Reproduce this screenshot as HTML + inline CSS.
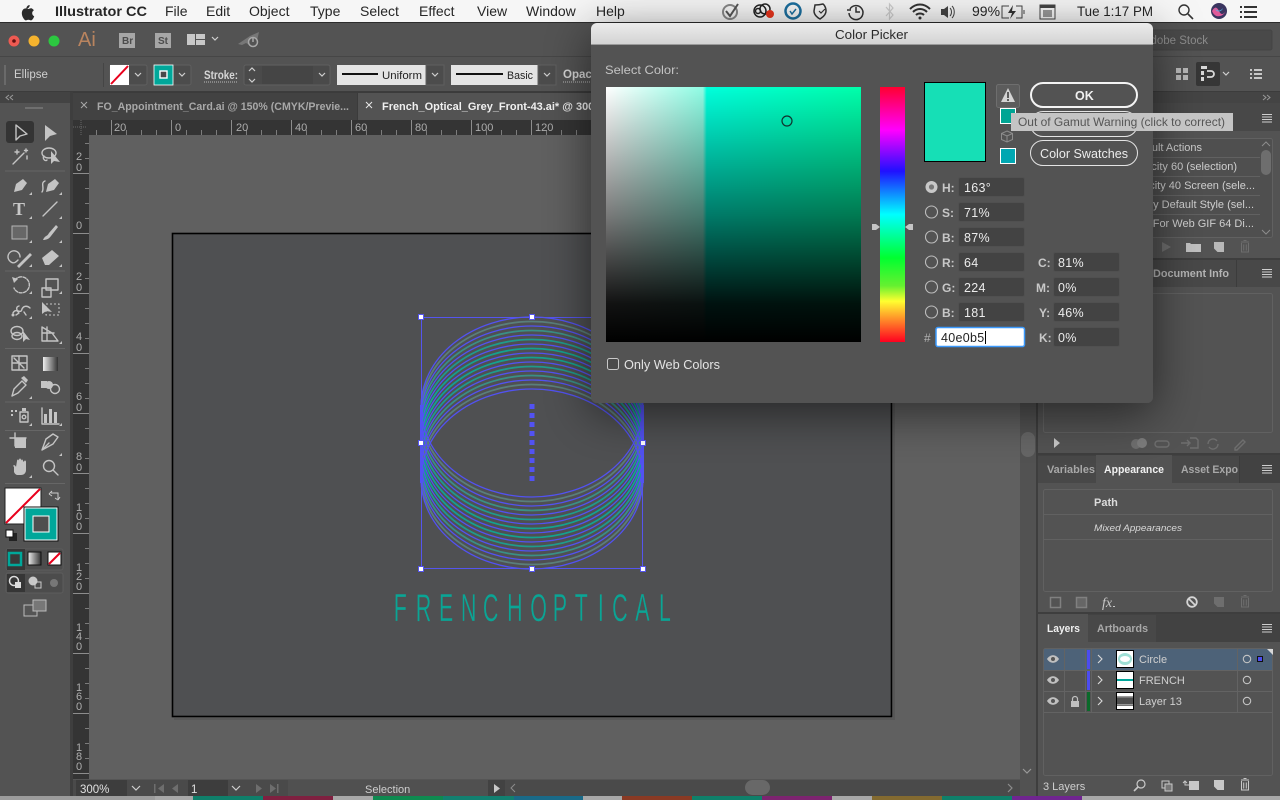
<!DOCTYPE html>
<html><head><meta charset="utf-8"><title>Illustrator CC</title>
<style>
html,body{margin:0;padding:0;background:#535353;width:1280px;height:800px;overflow:hidden}
svg{display:block;position:absolute;left:0;top:0}
text{font-family:"Liberation Sans",sans-serif;font-size:12px;fill:#d4d4d4;white-space:pre}
.m{font-size:14px;fill:#262626}
.b{font-weight:bold}
.f{font-size:12.5px;fill:#ececec;letter-spacing:.3px}
.l{font-size:12px;fill:#c8c8c8;font-weight:bold}
.r{font-size:11px;fill:#adadad}
.p{font-size:11px;fill:#cfcfcf}
.tb{font-size:11px;font-weight:bold;fill:#a8a8a8}
.tw{font-size:11px;font-weight:bold;fill:#f0f0f0}
.ic{fill:none;stroke:#c4c4c4;stroke-width:1.4;stroke-linejoin:round;stroke-linecap:round}
.if{fill:#c4c4c4;stroke:none}
.dim{fill:none;stroke:#6e6e6e;stroke-width:1.4}
.dimf{fill:#6e6e6e}
.tri{fill:#c4c4c4}
.chev{fill:none;stroke:#cfcfcf;stroke-width:1.2}
</style></head><body>
<svg width="1280" height="800" viewBox="0 0 1280 800" xmlns="http://www.w3.org/2000/svg">
<defs>
<linearGradient id="ptop" x1="0" x2="1" y1="0" y2="0">
<stop offset="0" stop-color="#fff"/><stop offset=".38" stop-color="#8ffce4"/><stop offset=".395" stop-color="#00ffdc"/><stop offset="1" stop-color="#00ffaa"/></linearGradient>
<linearGradient id="pdark" x1="0" x2="0" y1="0" y2="1">
<stop offset="0" stop-color="#000" stop-opacity="0"/><stop offset=".5" stop-color="#000" stop-opacity=".52"/><stop offset=".85" stop-color="#000" stop-opacity=".93"/><stop offset="1" stop-color="#000"/></linearGradient>
<linearGradient id="hue" x1="0" x2="0" y1="0" y2="1">
<stop offset="0" stop-color="#ff0030"/><stop offset=".17" stop-color="#ff00ff"/><stop offset=".33" stop-color="#2010ff"/><stop offset=".5" stop-color="#00ffff"/><stop offset=".67" stop-color="#00ff30"/><stop offset=".78" stop-color="#66f030"/><stop offset=".84" stop-color="#ffff30"/><stop offset="1" stop-color="#ff0020"/></linearGradient>
<linearGradient id="ttl" x1="0" x2="0" y1="0" y2="1"><stop offset="0" stop-color="#ececec"/><stop offset="1" stop-color="#d2d2d2"/></linearGradient>
<linearGradient id="gtool" x1="0" x2="1" y1="0" y2="0"><stop offset="0" stop-color="#eee"/><stop offset="1" stop-color="#333"/></linearGradient>
<pattern id="hr" width="60" height="15" patternUnits="userSpaceOnUse" patternTransform="translate(111 120)">
<rect x="0" y="0" width="1" height="15" fill="#8c8c8c"/><rect x="15" y="10" width="1" height="5" fill="#7c7c7c"/><rect x="30" y="10" width="1" height="5" fill="#7c7c7c"/><rect x="45" y="10" width="1" height="5" fill="#7c7c7c"/></pattern>
<pattern id="vr" width="16" height="60" patternUnits="userSpaceOnUse" patternTransform="translate(73 173)">
<rect x="0" y="0" width="16" height="1" fill="#8c8c8c"/><rect x="12" y="15" width="4" height="1" fill="#7c7c7c"/><rect x="12" y="30" width="4" height="1" fill="#7c7c7c"/><rect x="12" y="45" width="4" height="1" fill="#7c7c7c"/></pattern>
<filter id="sh" x="-20%" y="-20%" width="140%" height="150%"><feDropShadow dx="0" dy="10" stdDeviation="24" flood-color="#000" flood-opacity=".55"/></filter>
<g id="menu"><rect x="0" y="0" width="10" height="1" fill="#cfcfcf"/><rect x="0" y="2.5" width="10" height="1" fill="#cfcfcf"/><rect x="0" y="5" width="10" height="1" fill="#cfcfcf"/><rect x="0" y="7.5" width="10" height="1" fill="#cfcfcf"/></g>
<g id="trash"><path d="M-4-5H4M-1.5-6.5H1.5M-3.500-4V5H3.500V-4M-1.300-2.500V3.500M1.300-2.500V3.500" fill="none" stroke="currentColor" stroke-width="1"/></g>
<g id="new"><path d="M-5-5H5V5H-1.500L-5 1.500Z" fill="currentColor"/></g>
</defs>

<!-- app background -->
<rect width="1280" height="800" fill="#535353"/>
<!-- menu bar -->
<rect width="1280" height="22" fill="#f6f6f6"/><rect y="22" width="1280" height="1" fill="#2c2c2c"/>
<path d="M31.300 8.300c-1.200-.1-2.200.7-2.900.7-.7 0-1.500-.7-2.600-.6-1.400 0-2.600.8-3.300 2-1.400 2.400-.4 6 1 8 .7 1 1.400 2 2.400 2 1 0 1.300-.6 2.500-.6s1.500.6 2.500.6 1.700-1 2.300-1.900c.7-1.100 1-2.200 1-2.200s-2-.8-2-3c0-2 1.600-2.900 1.700-3-1-1.400-2.400-1.900-2.600-2zM28.800 7.500c.6-.7 1-1.600.8-2.500-.8 0-1.800.5-2.400 1.200-.5.600-1 1.600-.8 2.500.9 0 1.800-.5 2.400-1.200z" fill="#2b2b2b"/>
<text x="55" y="16" class="m b" textLength="92" lengthAdjust="spacingAndGlyphs">Illustrator CC</text>
<text x="165" y="16" class="m">File</text><text x="206" y="16" class="m">Edit</text><text x="249" y="16" class="m">Object</text><text x="310" y="16" class="m">Type</text><text x="360" y="16" class="m">Select</text><text x="419" y="16" class="m">Effect</text><text x="477" y="16" class="m">View</text><text x="526" y="16" class="m">Window</text><text x="596" y="16" class="m">Help</text>
<!-- status icons -->
<g fill="none" stroke="#333" stroke-width="1.500">
<circle cx="730" cy="12" r="7" stroke="#888" stroke-width="2"/><path d="M726 11l4 5 8-12" stroke="#555" stroke-width="2"/>
<circle cx="760" cy="11" r="6" stroke="#222"/><circle cx="765" cy="9" r="5" stroke="#222"/><circle cx="758" cy="11" r="2.500" stroke="#222"/>
<circle cx="793" cy="11" r="7.500" stroke="#1b6e9e" stroke-width="2.500"/><path d="M790 11l2 3 4-5" stroke="#1b6e9e"/>
<path d="M816 6c4 0 8-1 8-1s3 2 3 7-5 7-6 8c-2-1-6-4-6-8z" transform="translate(-1 -1)"/><path d="M819 11l2 2 4-4" stroke-width="1.200"/>
<path d="M850 9a7 7 0 1 1-1 4M847 10h4M856 7v5h4"/>
<path d="M886 7l7 8-3.500 4v-15l3.500 4-7 8" stroke="#ccc" stroke-width="1.200"/>
<path d="M910 9c6-6 14-6 20 0M913 12c4-4 10-4 14 0M916 15c2-2 6-2 8 0" stroke-width="2"/>
</g>
<circle cx="920" cy="18" r="1.500" fill="#333"/>
<path d="M941 9h3l4-3v12l-4-3h-3z" fill="#444"/><path d="M950 8c2 2 2 6 0 8M952 6c3 3 3 9 0 12" fill="none" stroke="#444" stroke-width="1"/>
<rect x="769" y="10" width="8" height="8" rx="4" fill="#e8341c" transform="translate(-3 0)"/>
<text x="972" y="16" class="m">99%</text>
<path d="M1009 6h-7v12h7M1016 6h6v12h-6M1024 10v4" fill="none" stroke="#444" stroke-width="1"/><path d="M1013 5l-5 8h4l-2 6 6-8h-4z" fill="#333"/>
<rect x="1040" y="5" width="15" height="14" fill="none" stroke="#444"/><rect x="1040" y="5" width="15" height="3" fill="#444"/><rect x="1043" y="10" width="9" height="7" fill="#999"/>
<text x="1077" y="16" class="m" textLength="76" lengthAdjust="spacingAndGlyphs">Tue 1:17 PM</text>
<circle cx="1184" cy="10" r="5" fill="none" stroke="#333" stroke-width="1.400"/><path d="M1188 14l5 5" stroke="#333" stroke-width="1.600"/>
<circle cx="1219" cy="11" r="8" fill="#3a3560"/><path d="M1212 11c3-5 5-4 7 0s4 4 7 0c-3 6-11 8-14 0z" fill="#e05a9a"/><path d="M1215 8c2 4 6 3 8 0-1 4-7 5-8 0z" fill="#53b8e8"/>
<g fill="#333"><rect x="1240" y="6" width="2" height="2"/><rect x="1244" y="6" width="13" height="2"/><rect x="1240" y="11" width="2" height="2"/><rect x="1244" y="11" width="13" height="2"/><rect x="1240" y="16" width="2" height="2"/><rect x="1244" y="16" width="13" height="2"/></g>

<!-- title strip -->
<rect y="23" width="1280" height="34" fill="#535353"/>
<rect y="56" width="1280" height="1" fill="#464646"/>
<circle cx="14" cy="41" r="5.500" fill="#ee5a52"/><circle cx="14" cy="41" r="1.800" fill="#5f1010"/>
<circle cx="34" cy="41" r="5.500" fill="#f5b32e"/><circle cx="54" cy="41" r="5.500" fill="#2cc840"/>
<text x="78" y="46" style="font-size:20px;fill:#b9845f">Ai</text>
<rect x="119" y="33" width="16" height="15" fill="#a6a6a6"/><text x="122" y="44" style="font-size:10px;font-weight:bold;fill:#4c4c4c">Br</text>
<rect x="155" y="33" width="16" height="15" fill="#a6a6a6"/><text x="158" y="44" style="font-size:10px;font-weight:bold;fill:#4c4c4c">St</text>
<g fill="#c8c8c8"><rect x="187" y="34" width="8" height="11"/><rect x="196" y="34" width="9" height="5"/><rect x="196" y="40" width="9" height="5"/></g>
<path d="M212 37l3 3 3-3" class="chev"/>
<path d="M238 44l12-8 9-4-2 9-6 5-5-3-4 2z" fill="#777"/><circle cx="253" cy="42" r="4.500" fill="#535353" stroke="#a8a8a8" stroke-width="1.500"/><path d="M253 37v5" stroke="#a8a8a8" stroke-width="1.500"/>
<rect x="1130" y="30" width="142" height="20" rx="2" fill="#494949" stroke="#444"/>
<text x="1208" y="44" text-anchor="end" style="font-size:11.500px;fill:#8c8c8c">Adobe Stock</text>

<!-- control bar -->
<rect y="57" width="1280" height="35" fill="#535353"/><rect y="91" width="1280" height="1" fill="#3c3c3c"/>
<rect x="4" y="65" width="2" height="20" fill="#6a6a6a"/>
<text x="14" y="78" style="font-size:11.500px;fill:#d0d0d0">Ellipse</text>
<rect x="103" y="63" width="1" height="24" fill="#454545"/>
<rect x="110" y="65" width="37" height="20" rx="2" fill="#4c4c4c" stroke="#5f5f5f"/>
<rect x="110" y="65" width="19" height="20" fill="#fff"/><path d="M111 84l17-18" stroke="#e8001c" stroke-width="2"/>
<path d="M135 73l3 3 3-3" class="chev"/>
<rect x="154" y="65" width="37" height="20" rx="2" fill="#4c4c4c" stroke="#5f5f5f"/>
<rect x="154" y="65" width="19" height="20" fill="#00a79a" stroke="#fff" stroke-width=".8"/><rect x="160" y="71" width="7" height="7" fill="#4a4a4a" stroke="#fff" stroke-width="1.400"/>
<path d="M179 73l3 3 3-3" class="chev"/>
<text x="204" y="79" class="b" style="font-size:11.500px;fill:#d6d6d6" textLength="34" lengthAdjust="spacingAndGlyphs">Stroke:</text>
<path d="M204 82h34" stroke="#bbb" stroke-dasharray="1 1"/>
<rect x="244" y="65" width="86" height="20" rx="2" fill="#4a4a4a" stroke="#5f5f5f"/><rect x="262" y="66" width="51" height="18" fill="#454545"/>
<path d="M249 71l3-3 3 3M249 79l3 3 3-3" class="chev"/><path d="M319 73l3 3 3-3" class="chev"/>
<rect x="337" y="65" width="89" height="20" fill="#e4e4e4"/><rect x="342" y="73" width="36" height="2" fill="#111"/>
<text x="382" y="79" style="font-size:11px;fill:#222" textLength="40" lengthAdjust="spacingAndGlyphs">Uniform</text>
<rect x="426" y="65" width="18" height="20" fill="#4c4c4c" stroke="#5f5f5f"/><path d="M432 73l3 3 3-3" class="chev"/>
<rect x="451" y="65" width="87" height="20" fill="#e4e4e4"/><rect x="456" y="73" width="47" height="2" fill="#111"/>
<text x="507" y="79" style="font-size:11px;fill:#222" textLength="26" lengthAdjust="spacingAndGlyphs">Basic</text>
<rect x="538" y="65" width="18" height="20" fill="#4c4c4c" stroke="#5f5f5f"/><path d="M544 73l3 3 3-3" class="chev"/>
<text x="563" y="78" class="b" style="font-size:11.500px;fill:#d6d6d6">Opacity</text>
<path d="M563 82h30" stroke="#bbb" stroke-dasharray="1 1"/>
<!-- right control -->
<g fill="#b8b8b8"><rect x="1176" y="68" width="5" height="5"/><rect x="1183" y="68" width="5" height="5"/><rect x="1176" y="75" width="5" height="5"/><rect x="1183" y="75" width="5" height="5"/></g>
<rect x="1196" y="62" width="24" height="24" rx="2" fill="#363636"/>
<g fill="#d8d8d8"><rect x="1201" y="66" width="6" height="3"/><rect x="1201" y="71" width="3" height="4"/><rect x="1201" y="77" width="3" height="4"/></g><path d="M1207 71h4a3 3 0 0 1 0 6h-4" fill="none" stroke="#d8d8d8" stroke-width="1.800"/>
<path d="M1223 72l3 3 3-3" class="chev"/>
<g fill="#c8c8c8"><rect x="1250" y="69" width="2" height="2"/><rect x="1254" y="69" width="8" height="2"/><rect x="1250" y="73" width="2" height="2"/><rect x="1254" y="73" width="8" height="2"/><rect x="1250" y="77" width="2" height="2"/><rect x="1254" y="77" width="8" height="2"/></g>

<!-- toolbar -->
<rect y="92" width="70" height="708" fill="#535353"/><rect y="92" width="70" height="11" fill="#434343"/>
<rect x="70" y="92" width="3" height="708" fill="#3e3e3e"/>
<path d="M9 95l-3 2.500 3 2.500M13 95l-3 2.500 3 2.500" fill="none" stroke="#9a9a9a"/>
<rect x="25" y="107" width="18" height="2" fill="#777" opacity=".8"/>
<rect x="6" y="121" width="28" height="22" rx="3" fill="#343434"/>
<g fill="#666"><rect x="5" y="170.500" width="60" height="1"/><rect x="5" y="270.500" width="60" height="1"/><rect x="5" y="348" width="60" height="1"/><rect x="5" y="401.500" width="60" height="1"/><rect x="5" y="430" width="60" height="1"/><rect x="5" y="483" width="60" height="1"/></g>
<!-- tools -->
<path class="ic" d="M16 125v15l4-4 7-2z"/><path class="if" d="M45 125v16l5-5 7-2z"/>
<path class="ic" d="M13 164l11-11" stroke-width="2.500"/><path class="ic" d="M17 150v4M15 152h4M26 149v3M24.500 150.500h3M27 156v3" stroke-width="1"/>
<ellipse class="ic" cx="49" cy="153" rx="7" ry="5"/><path class="if" d="M51 151v13l3-3 6 1z"/><path class="ic" d="M44 156c-2 2 1 6 3 4"/>
<path class="if" d="M14 192l2-8 7-5 4 4-5 7z"/>
<path class="if" d="M46 192l2-8 7-5 4 4-5 7z"/><path class="ic" d="M45 181c-5 2 0 7-3 11"/>
<text x="13" y="215" style="font-family:'Liberation Serif',serif;font-size:18px;font-weight:bold;fill:#c8c8c8">T</text>
<path class="ic" d="M43 216l14-14"/>
<rect x="12" y="226" width="15" height="13" fill="#676767" stroke="#b4b4b4"/>
<path class="if" d="M43 240c2-5 4-3 6-7l7-8 2 2-7 9c-2 3-5 4-8 4z"/>
<path class="ic" d="M20 257a6 6 0 1 0-9 5c3 2 5 0 7-2" /><path class="if" d="M17 266l13-13 2 2-13 13z"/>
<path class="if" d="M42 258l10-8 7 6-10 9h-4z"/>
<path class="ic" d="M15 280a8 8 0 1 1-1 8" stroke-dasharray="3 1.500"/><path class="if" d="M12 277l6 2-4 4z"/>
<rect x="42" y="288" width="9" height="9" class="ic"/><rect x="46" y="279" width="12" height="11" class="ic"/>
<path class="ic" d="M13 313c3-6 8 2 9-4 2-4 6-3 8-1M16 315l3-2M19 306c-4 1-2 5 0 7M24 312l2 3"/><circle cx="13" cy="315" r="1.500" class="if"/>
<path class="if" d="M42 302v12l4-3 6 1z"/><rect x="46" y="304" width="13" height="11" fill="none" stroke="#c4c4c4" stroke-dasharray="2 2"/>
<ellipse class="ic" cx="17" cy="331" rx="6" ry="4.500"/><ellipse class="ic" cx="17" cy="336" rx="5" ry="3.500"/><path class="if" d="M23 331v11l3-3 4 1z"/>
<path class="ic" d="M42 327v14h16l-6-8zM42 333h12M47 327v14"/>
<g><rect x="12" y="356" width="15" height="14" class="ic" stroke-width="1.100"/><path class="ic" d="M13 363h13M19 356v14M14 358l10 10" stroke-width=".8"/></g>
<rect x="43" y="357" width="15" height="14" fill="url(#gtool)"/>
<path class="ic" d="M12 396l2-7 8-8 4 4-8 8z"/><path class="if" d="M21 378l3-2 4 4-2 3z"/>
<rect x="41" y="381" width="6" height="7" class="if"/><circle cx="49" cy="385" r="4" class="if"/><circle cx="55" cy="389" r="4.500" class="ic"/>
<g class="if"><rect x="11" y="410" width="2" height="2"/><rect x="15" y="410" width="2" height="2"/><rect x="11" y="414" width="2" height="2"/></g><rect x="20" y="412" width="8" height="10" class="ic"/><rect x="22" y="408" width="4" height="3" class="if"/><circle cx="24" cy="417" r="1.800" class="ic"/>
<g class="if"><rect x="44" y="414" width="3" height="9"/><rect x="49" y="409" width="3" height="14"/><rect x="54" y="412" width="3" height="11"/></g><path class="ic" d="M42 408v16h17" stroke-width="1"/>
<path class="ic" d="M10 438h16M15 433v13"/><rect x="15" y="438" width="11" height="10" class="if"/>
<path class="ic" d="M42 450l4-11 7-5 5 3-5 7z"/><path class="ic" d="M43 449l6-6"/>
<path class="if" transform="translate(0 5)" d="M14 462c-2-2 1-3 2 0l1-6c0-2 2-2 2 0v-1c0-2 2-2 2 0v1c0-2 2-2 2 0l1 1c0-2 2-2 2 0v8c0 3-2 5-5 5h-3c-2 0-3-1-4-3z"/>
<circle cx="49" cy="466" r="5.500" class="ic"/><path class="ic" d="M53 470l5 5" stroke-width="2"/>
<!-- tool corner tris -->
<g class="tri"><path d="M32 195v-3l-3 3zM62 195v-3l-3 3zM32 219v-3l-3 3zM62 219v-3l-3 3zM32 243v-3l-3 3zM62 243v-3l-3 3zM32 267v-3l-3 3zM62 267v-3l-3 3zM32 294v-3l-3 3zM62 294v-3l-3 3zM32 319v-3l-3 3zM62 344v-3l-3 3zM32 399v-3l-3 3zM32 426v-3l-3 3zM62 426v-3l-3 3zM62 456v-3l-3 3zM32 478v-3l-3 3z"/></g>
<!-- fill stroke -->
<rect x="5" y="488" width="36" height="36" fill="#fff" stroke="#222"/><path d="M6 523l34-34" stroke="#e8001c" stroke-width="2"/>
<rect x="24" y="507" width="34" height="34" fill="#00a79a" stroke="#111" stroke-width="1"/><rect x="25" y="508" width="32" height="32" fill="none" stroke="#fff" stroke-width="1"/>
<rect x="33" y="516" width="16" height="16" fill="#4f4f4f" stroke="#fff" stroke-width="1"/>
<path d="M51 493h7v6M49 494l3-3M49 494l3 2M58 500l-3-2M58 500l2-3" fill="none" stroke="#ccc"/>
<rect x="9" y="533" width="8" height="8" fill="#222"/><rect x="6" y="530" width="7" height="7" fill="#fff" stroke="#111"/>
<rect x="6" y="549" width="57" height="21" rx="2" fill="#4c4c4c" stroke="#5c5c5c"/><rect x="7" y="549" width="18" height="21" fill="#363636"/>
<rect x="9" y="553" width="12" height="12" fill="#393939" stroke="#00a79a" stroke-width="2.500"/>
<rect x="28" y="552" width="13" height="13" fill="url(#gtool)" stroke="#111"/>
<rect x="48" y="552" width="13" height="13" fill="#fff" stroke="#111"/><path d="M49 564l11-11" stroke="#e8001c" stroke-width="2"/>
<rect x="6" y="573" width="57" height="20" rx="2" fill="#4c4c4c" stroke="#5c5c5c"/><rect x="7" y="574" width="18" height="18" fill="#363636"/>
<circle cx="14" cy="581" r="4.500" fill="none" stroke="#ddd" stroke-width="1.500"/><rect x="15" y="582" width="6" height="6" fill="#ddd"/>
<circle cx="33" cy="581" r="4.500" fill="#c8c8c8"/><rect x="35" y="582" width="6" height="6" fill="none" stroke="#ccc"/>
<circle cx="54" cy="583" r="4" fill="#777"/>
<rect x="24" y="605" width="13" height="11" fill="#555" stroke="#bbb"/><rect x="33" y="600" width="13" height="11" fill="#777" stroke="#bbb"/>

<!-- tabs -->
<rect x="73" y="92" width="965" height="28" fill="#3b3b3b"/>
<rect x="73" y="93" width="284" height="27" fill="#424242"/>
<rect x="358" y="93" width="233" height="27" fill="#535353"/>
<path d="M81 102l6 6M87 102l-6 6" stroke="#a8a8a8"/><path d="M366 102l6 6M372 102l-6 6" stroke="#e8e8e8"/>
<text x="97" y="110" class="tb" textLength="252" lengthAdjust="spacingAndGlyphs">FO_Appointment_Card.ai @ 150% (CMYK/Previe...</text>
<text x="382" y="110" class="tw" textLength="222" lengthAdjust="spacingAndGlyphs">French_Optical_Grey_Front-43.ai* @ 300%</text>

<!-- canvas -->
<rect x="89" y="135" width="931" height="645" fill="#606060"/>
<rect x="172.500" y="233.500" width="719" height="483" fill="#4f5052" stroke="#000" stroke-width="1.600"/>
<rect x="893" y="235" width="2" height="484" fill="#575757"/><rect x="174" y="718" width="721" height="2" fill="#575757"/>

<!-- rulers -->
<rect x="73" y="120" width="947" height="15" fill="#343434"/>
<rect x="89" y="120" width="931" height="15" fill="url(#hr)"/>
<rect x="73" y="135" width="16" height="645" fill="#343434"/>
<rect x="73" y="135" width="16" height="645" fill="url(#vr)"/>
<path d="M73 127h14M81 120v15" stroke="#666" stroke-dasharray="1 1"/>
<g><text x="114" y="131" class="r">20</text><text x="175" y="131" class="r">0</text><text x="236" y="131" class="r">20</text><text x="295" y="131" class="r">40</text><text x="355" y="131" class="r">60</text><text x="415" y="131" class="r">80</text><text x="475" y="131" class="r">100</text><text x="535" y="131" class="r">120</text></g>
<g>
<text x="76" y="160" class="r">2</text><text x="76" y="171" class="r">0</text>
<text x="76" y="229" class="r">0</text>
<text x="76" y="280" class="r">2</text><text x="76" y="291" class="r">0</text>
<text x="76" y="340" class="r">4</text><text x="76" y="351" class="r">0</text>
<text x="76" y="400" class="r">6</text><text x="76" y="411" class="r">0</text>
<text x="76" y="460" class="r">8</text><text x="76" y="471" class="r">0</text>
<text x="76" y="511" class="r">1</text><text x="76" y="520" class="r">0</text><text x="76" y="530" class="r">0</text>
<text x="76" y="571" class="r">1</text><text x="76" y="580" class="r">2</text><text x="76" y="590" class="r">0</text>
<text x="76" y="631" class="r">1</text><text x="76" y="640" class="r">4</text><text x="76" y="650" class="r">0</text>
<text x="76" y="691" class="r">1</text><text x="76" y="700" class="r">6</text><text x="76" y="710" class="r">0</text>
<text x="76" y="751" class="r">1</text><text x="76" y="760" class="r">8</text><text x="76" y="770" class="r">0</text>
</g>

<!-- artwork -->
<g fill="none">
<g stroke-width="1.800">
<ellipse cx="532" cy="411.500" rx="111" ry="90" stroke="#5a7e7b"/>
<ellipse cx="532" cy="420.500" rx="111" ry="90" stroke="#3a8f86"/>
<ellipse cx="532" cy="429.500" rx="111" ry="90" stroke="#1f9a8d"/>
<ellipse cx="532" cy="438.500" rx="111" ry="90" stroke="#14a190"/>
<ellipse cx="532" cy="447.500" rx="111" ry="90" stroke="#14a190"/>
<ellipse cx="532" cy="456.500" rx="111" ry="90" stroke="#1f9a8d"/>
<ellipse cx="532" cy="465.500" rx="111" ry="90" stroke="#3a8f86"/>
<ellipse cx="532" cy="474.500" rx="111" ry="90" stroke="#5a7e7b"/>
</g>
<g stroke="#5252f2" stroke-width="1.300">
<ellipse cx="532" cy="407" rx="111" ry="90"/><ellipse cx="532" cy="416" rx="111" ry="90"/><ellipse cx="532" cy="425" rx="111" ry="90"/><ellipse cx="532" cy="434" rx="111" ry="90"/><ellipse cx="532" cy="443" rx="111" ry="90"/><ellipse cx="532" cy="452" rx="111" ry="90"/><ellipse cx="532" cy="461" rx="111" ry="90"/><ellipse cx="532" cy="470" rx="111" ry="90"/><ellipse cx="532" cy="479" rx="111" ry="90"/>
</g>
<rect x="421.500" y="317.500" width="221" height="251" stroke="#5555ee"/>
</g>
<rect x="420" y="405" width="3" height="78" fill="#5252f2"/><rect x="641" y="405" width="3" height="78" fill="#5252f2"/>
<g fill="#5252f2"><rect x="529.500" y="404" width="5" height="5"/><rect x="529.500" y="413" width="5" height="5"/><rect x="529.500" y="422" width="5" height="5"/><rect x="529.500" y="431" width="5" height="5"/><rect x="529.500" y="440" width="5" height="5"/><rect x="529.500" y="449" width="5" height="5"/><rect x="529.500" y="458" width="5" height="5"/><rect x="529.500" y="467" width="5" height="5"/><rect x="529.500" y="476" width="5" height="5"/></g>
<g fill="#fff" stroke="#5555ee"><rect x="418.500" y="314.500" width="5" height="5"/><rect x="529.500" y="314.500" width="5" height="5"/><rect x="418.500" y="440.500" width="5" height="5"/><rect x="640.500" y="440.500" width="5" height="5"/><rect x="418.500" y="566.500" width="5" height="5"/><rect x="529.500" y="566.500" width="5" height="5"/><rect x="640.500" y="566.500" width="5" height="5"/></g>
<g transform="scale(.55 1)"><text x="716 756 798 838 878 922 964 1005 1045 1087 1113 1155 1198" y="621" style="font-size:39px;fill:#0aa595;stroke:#4f5052;stroke-width:.35px">FRENCHOPTICAL</text></g>

<!-- scrollbars -->
<rect x="1020" y="135" width="18" height="665" fill="#525252"/><rect x="1036" y="92" width="2" height="704" fill="#3e3e3e"/>
<rect x="1021" y="432" width="14" height="25" rx="7" fill="#666"/>
<path d="M1023 769l4 4 4-4" fill="none" stroke="#999" stroke-width="1.200"/>
<!-- status bar -->
<rect x="73" y="780" width="947" height="16" fill="#4a4a4a"/>
<rect x="73" y="779" width="947" height="1" fill="#555"/>
<rect x="76" y="780" width="51" height="16" fill="#3d3d3d"/>
<text x="80" y="793" style="font-size:11.500px;fill:#e0e0e0">300%</text>
<path d="M132 786l4 4 4-4" class="chev"/>
<g class="dimf"><rect x="154" y="784" width="1.500" height="9"/><path d="M164 784l-6 4.500 6 4.500zM178 784l-6 4.500 6 4.500zM256 784l6 4.500-6 4.500zM270 784l6 4.500-6 4.500z"/><rect x="277" y="784" width="1.500" height="9"/></g>
<rect x="188" y="780" width="40" height="16" fill="#3d3d3d"/>
<text x="191" y="793" style="font-size:11.500px;fill:#e0e0e0">1</text>
<path d="M232 786l4 4 4-4" class="chev"/>
<rect x="288" y="780" width="200" height="16" fill="#505050"/>
<text x="365" y="793" style="font-size:11px;fill:#cfcfcf">Selection</text>
<rect x="488" y="780" width="17" height="16" fill="#424242"/><path d="M494 784l6 4.500-6 4.500z" fill="#c8c8c8"/>
<path d="M515 784l-4 4 4 4" fill="none" stroke="#8c8c8c"/>
<rect x="745" y="780" width="25" height="15" rx="7.500" fill="#686868"/>
<path d="M1008 784l4 4-4 4" fill="none" stroke="#8c8c8c" stroke-width="1.200"/>

<!-- right panels -->
<rect x="1038" y="92" width="242" height="708" fill="#535353"/>
<rect x="1038" y="92" width="242" height="11" fill="#444"/>
<path d="M1263 95l3 2.500-3 2.500M1267 95l3 2.500-3 2.500" fill="none" stroke="#999"/>
<rect x="1038" y="103" width="242" height="28" fill="#484848"/>
<use href="#menu" x="1262" y="114"/>
<rect x="1043.500" y="138.500" width="229" height="99" rx="2" fill="#4f4f4f" stroke="#616161"/>
<g fill="#616161"><rect x="1044" y="157" width="216" height="1"/><rect x="1044" y="176" width="216" height="1"/><rect x="1044" y="195" width="216" height="1"/><rect x="1044" y="214" width="216" height="1"/></g>
<g>
<text x="1202" y="151" text-anchor="end" class="p">Default Actions</text>
<text x="1237" y="170" text-anchor="end" class="p">Opacity 60 (selection)</text>
<text x="1255" y="189" text-anchor="end" class="p">Opacity 40 Screen (sele...</text>
<text x="1254" y="208" text-anchor="end" class="p">Apply Default Style (sel...</text>
<text x="1254" y="227" text-anchor="end" class="p">Save For Web GIF 64 Di...</text>
</g>
<rect x="1261" y="150" width="10" height="25" rx="5" fill="#6e6e6e"/>
<path d="M1262 146l4-4 4 4M1262 230l4 4 4-4" fill="none" stroke="#8c8c8c"/>
<path d="M1162 242l9 5-9 5z" fill="#6e6e6e"/>
<path d="M1186 243h4l1 1h10v8h-15z" fill="#c0c0c0"/>
<g color="#b8b8b8"><use href="#new" x="1219" y="247"/></g>
<g color="#6e6e6e"><use href="#trash" x="1245" y="247"/></g>
<rect x="1038" y="258" width="242" height="2" fill="#3e3e3e"/>
<rect x="1038" y="260" width="242" height="27" fill="#484848"/><rect x="1236" y="260" width="1" height="27" fill="#3c3c3c"/>
<text x="1153" y="277" class="tb" style="fill:#b4b4b4" textLength="76" lengthAdjust="spacingAndGlyphs">Document Info</text>
<use href="#menu" x="1262" y="269"/>
<rect x="1043.500" y="293.500" width="229" height="139" rx="2" fill="none" stroke="#616161"/>
<path d="M1054 438l6 5-6 5z" fill="#c8c8c8"/>
<g class="dimf"><circle cx="1136" cy="444" r="5"/><circle cx="1142" cy="443" r="5" fill="#7c7c7c"/></g>
<g class="dim"><rect x="1155" y="441" width="14" height="6" rx="3"/><path d="M1181 443h8M1187 440l3 3-3 3M1190 438h6l2 2v8h-8M1208 444a5 5 0 0 1 9-3M1218 444a5 5 0 0 1-9 3M1235 448l8-8 2 2-8 8h-2z"/></g>
<rect x="1038" y="453" width="242" height="2" fill="#3e3e3e"/>
<!-- appearance -->
<rect x="1038" y="455" width="242" height="28" fill="#424242"/>
<rect x="1038" y="456" width="58" height="27" fill="#484848"/><rect x="1172" y="456" width="67" height="27" fill="#484848"/><rect x="1239" y="456" width="1" height="27" fill="#3c3c3c"/>
<rect x="1096" y="455" width="76" height="29" fill="#535353"/>
<text x="1047" y="473" class="tb" textLength="48" lengthAdjust="spacingAndGlyphs">Variables</text>
<text x="1104" y="473" class="tw" textLength="60" lengthAdjust="spacingAndGlyphs">Appearance</text>
<text x="1181" y="473" class="tb" textLength="57" lengthAdjust="spacingAndGlyphs">Asset Expo</text>
<use href="#menu" x="1262" y="465"/>
<rect x="1043.500" y="489.500" width="229" height="102" rx="2" fill="none" stroke="#616161"/>
<rect x="1044" y="514" width="228" height="1" fill="#616161"/><rect x="1044" y="539" width="228" height="1" fill="#616161"/>
<text x="1094" y="506" class="b" style="font-size:11px;fill:#dcdcdc">Path</text>
<text x="1094" y="531" style="font-size:9.500px;font-style:italic;fill:#d8d8d8" textLength="88" lengthAdjust="spacingAndGlyphs">Mixed Appearances</text>
<rect x="1050.500" y="597.500" width="10" height="10" fill="none" stroke="#808080" stroke-width="1.500"/>
<rect x="1076.500" y="597.500" width="10" height="10" fill="#666" stroke="#808080" stroke-width="1.500"/>
<text x="1102" y="607" style="font-family:'Liberation Serif',serif;font-style:italic;font-size:14px;fill:#c8c8c8">fx</text><rect x="1113" y="606" width="2" height="1" fill="#c8c8c8"/>
<circle cx="1192" cy="602" r="4.800" fill="none" stroke="#d4d4d4" stroke-width="1.800"/><path d="M1189 599l6 6" stroke="#d4d4d4" stroke-width="1.800"/>
<g color="#6e6e6e"><use href="#new" x="1219" y="602"/><use href="#trash" x="1245" y="602"/></g>
<rect x="1038" y="612" width="242" height="2" fill="#3e3e3e"/>
<!-- layers -->
<rect x="1038" y="614" width="242" height="28" fill="#424242"/>
<rect x="1088" y="615" width="68" height="27" fill="#484848"/>
<rect x="1038" y="614" width="50" height="29" fill="#535353"/>
<text x="1047" y="632" class="tw" textLength="33" lengthAdjust="spacingAndGlyphs">Layers</text>
<text x="1097" y="632" class="tb" textLength="51" lengthAdjust="spacingAndGlyphs">Artboards</text>
<use href="#menu" x="1262" y="624"/>
<rect x="1043.500" y="648.500" width="229" height="127" rx="2" fill="none" stroke="#616161"/>
<rect x="1044" y="649" width="228" height="21" fill="#4d6278"/>
<g fill="#636363"><rect x="1044" y="670" width="228" height="1"/><rect x="1044" y="691" width="228" height="1"/><rect x="1044" y="712" width="228" height="1"/>
<rect x="1064" y="649" width="1" height="63"/><rect x="1085" y="649" width="1" height="63"/><rect x="1091" y="649" width="1" height="63"/><rect x="1237" y="649" width="1" height="63"/></g>
<path d="M1267 649h6v6z" fill="#d8d8d8"/>
<rect x="1087" y="650" width="3" height="19" fill="#4c4cf0"/><rect x="1087" y="671" width="3" height="19" fill="#4c4cf0"/><rect x="1087" y="692" width="3" height="19" fill="#0a6a2a"/>
<g><path d="M1047 659c3-5 9-5 12 0-3 5-9 5-12 0z" fill="#c0c0c0"/><circle cx="1053" cy="659" r="2" fill="#555"/>
<path d="M1047 680c3-5 9-5 12 0-3 5-9 5-12 0z" fill="#c0c0c0"/><circle cx="1053" cy="680" r="2" fill="#555"/>
<path d="M1047 701c3-5 9-5 12 0-3 5-9 5-12 0z" fill="#c0c0c0"/><circle cx="1053" cy="701" r="2" fill="#555"/></g>
<rect x="1071" y="701" width="8" height="6" fill="#c0c0c0"/><path d="M1072.500 701v-2a2.500 2.500 0 0 1 5 0v2" fill="none" stroke="#c0c0c0" stroke-width="1.200"/>
<path d="M1098 655l4 4-4 4M1098 676l4 4-4 4M1098 697l4 4-4 4" fill="none" stroke="#d8d8d8" stroke-width="1.100"/>
<rect x="1116.500" y="650.500" width="17" height="17" fill="#fff" stroke="#000"/><ellipse cx="1125" cy="659" rx="7" ry="6" fill="#9fe0d6"/><ellipse cx="1125" cy="659" rx="5" ry="3" fill="#fff"/>
<rect x="1116.500" y="671.500" width="17" height="17" fill="#fff" stroke="#000"/><rect x="1117" y="679" width="16" height="2" fill="#00a79a"/>
<rect x="1116.500" y="692.500" width="17" height="17" fill="#4f4f4f" stroke="#000"/><rect x="1117" y="693" width="16" height="3" fill="#fff"/><rect x="1117" y="706" width="16" height="3" fill="#fff"/><rect x="1117" y="696" width="16" height="1.500" fill="#999"/><rect x="1117" y="704" width="16" height="1.500" fill="#999"/>
<text x="1139" y="663" class="p">Circle</text><text x="1139" y="684" class="p">FRENCH</text><text x="1139" y="705" class="p">Layer 13</text>
<g fill="none" stroke="#c4c4c4" stroke-width="1.100"><circle cx="1247" cy="659" r="3.700"/><circle cx="1247" cy="680" r="3.700"/><circle cx="1247" cy="701" r="3.700"/></g>
<rect x="1257.500" y="656.500" width="5" height="5" fill="#4c4cf0" stroke="#111"/>
<text x="1043" y="790" class="p">3 Layers</text>
<circle cx="1141" cy="784" r="4" fill="none" stroke="#c8c8c8" stroke-width="1.200"/><path d="M1138 787l-4 4" stroke="#c8c8c8" stroke-width="1.600"/>
<rect x="1162" y="781" width="7" height="7" fill="none" stroke="#c8c8c8"/><rect x="1165" y="784" width="7" height="7" fill="#777" stroke="#c8c8c8"/>
<path d="M1185 781v4h4M1183 783l2-2 2 2" fill="none" stroke="#c8c8c8"/><rect x="1189" y="781" width="10" height="9" fill="#c8c8c8"/>
<g color="#c8c8c8"><use href="#new" x="1219" y="785"/><use href="#trash" x="1245" y="785"/></g>
<rect x="1038" y="796" width="242" height="1" fill="#3e3e3e"/>

<!-- dock strip -->
<rect y="796" width="1280" height="4" fill="#a8a8a8"/>
<rect x="0" y="796" width="155" height="4" fill="#9c9c9c"/>
<rect x="193" y="796" width="70" height="4" fill="#0f7f6a"/><rect x="263" y="796" width="70" height="4" fill="#7f2040"/>
<rect x="373" y="796" width="70" height="4" fill="#0e8a50"/><rect x="443" y="796" width="71" height="4" fill="#128070"/><rect x="514" y="796" width="69" height="4" fill="#1a6a88"/>
<rect x="622" y="796" width="70" height="4" fill="#8a3a24"/><rect x="692" y="796" width="70" height="4" fill="#0f806a"/><rect x="762" y="796" width="70" height="4" fill="#7d2470"/>
<rect x="872" y="796" width="70" height="4" fill="#836a30"/><rect x="942" y="796" width="70" height="4" fill="#0f806a"/><rect x="1012" y="796" width="70" height="4" fill="#702590"/>

<!-- dialog -->
<path d="M597 23h550a6 6 0 0 1 6 6v368a6 6 0 0 1-6 6H597a6 6 0 0 1-6-6V29a6 6 0 0 1 6-6z" fill="#535353" filter="url(#sh)"/>
<path d="M597 23h550a6 6 0 0 1 6 6v16H591V29a6 6 0 0 1 6-6z" fill="url(#ttl)"/><rect x="591" y="44" width="562" height="1" fill="#9a9a9a"/>
<text x="835" y="39" style="font-size:12.500px;fill:#2a2a2a" textLength="73" lengthAdjust="spacingAndGlyphs">Color Picker</text>
<text x="605" y="74" style="font-size:12px;fill:#c4c4c4" textLength="74" lengthAdjust="spacingAndGlyphs">Select Color:</text>
<rect x="606" y="87" width="255" height="255" fill="url(#ptop)"/><rect x="606" y="87" width="255" height="255" fill="url(#pdark)"/>
<circle cx="787" cy="121" r="5" fill="none" stroke="#10332e" stroke-width="1.200"/>
<rect x="880" y="87" width="25" height="255" fill="url(#hue)"/>
<path d="M872 224h4l4 3-4 3h-4zM913 224h-4l-4 3 4 3h4z" fill="#c4c4c4"/>
<rect x="924.500" y="82.500" width="61" height="79" fill="#16dfb6" stroke="#000"/>
<rect x="996.500" y="84.500" width="23" height="23" rx="2" fill="#5c5c5c" stroke="#6e6e6e"/>
<path d="M1008 88l7 14h-14z" fill="#d4d4d4"/><rect x="1007" y="92" width="2" height="6" fill="#5c5c5c"/><rect x="1007" y="99" width="2" height="2" fill="#5c5c5c"/>
<rect x="1000.500" y="108.500" width="15" height="15" fill="#00a594" stroke="#fff"/>
<path d="M1007 131l5.500 2.500v6l-5.500 2.500-5.500-2.500v-6zM1001.500 133.500l5.500 2.500 5.500-2.500M1007 136v6" fill="none" stroke="#8c8c8c"/>
<rect x="1000.500" y="148.500" width="15" height="15" fill="#00a7b2" stroke="#fff"/>
<rect x="1031" y="83" width="106" height="24" rx="12" fill="#535353" stroke="#f4f4f4" stroke-width="2"/>
<text x="1075" y="100" style="font-size:12.500px;font-weight:bold;fill:#f0f0f0">OK</text>
<rect x="1030.500" y="111.500" width="107" height="25" rx="12.500" fill="#535353" stroke="#e4e4e4"/>
<text x="1067" y="128" style="font-size:12.500px;fill:#e8e8e8">Cancel</text>
<rect x="1030.500" y="140.500" width="107" height="25" rx="12.500" fill="#535353" stroke="#e4e4e4"/>
<text x="1040" y="158" style="font-size:12.500px;fill:#ececec" textLength="88" lengthAdjust="spacingAndGlyphs">Color Swatches</text>
<!-- fields -->
<g fill="#434343" stroke="#505050">
<rect x="958.500" y="177.500" width="66" height="19" rx="2"/><rect x="958.500" y="202.500" width="66" height="19" rx="2"/><rect x="958.500" y="227.500" width="66" height="19" rx="2"/><rect x="958.500" y="252.500" width="66" height="19" rx="2"/><rect x="958.500" y="277.500" width="66" height="19" rx="2"/><rect x="958.500" y="302.500" width="66" height="19" rx="2"/>
<rect x="1053.500" y="252.500" width="66" height="19" rx="2"/><rect x="1053.500" y="277.500" width="66" height="19" rx="2"/><rect x="1053.500" y="302.500" width="66" height="19" rx="2"/><rect x="1053.500" y="327.500" width="66" height="19" rx="2"/>
</g>
<rect x="936" y="327.500" width="88.500" height="19" rx="2" fill="#fff" stroke="#3b99fc" stroke-width="1.500"/>
<g fill="none" stroke="#bdbdbd" stroke-width="1.100"><circle cx="931.500" cy="212" r="6"/><circle cx="931.500" cy="237" r="6"/><circle cx="931.500" cy="262" r="6"/><circle cx="931.500" cy="287" r="6"/><circle cx="931.500" cy="312" r="6"/></g>
<circle cx="931.500" cy="187" r="6" fill="#c8c8c8"/><circle cx="931.500" cy="187" r="2.600" fill="#777"/>
<text x="942" y="192" class="l">H:</text><text x="942" y="217" class="l">S:</text><text x="942" y="242" class="l">B:</text><text x="942" y="267" class="l">R:</text><text x="942" y="292" class="l">G:</text><text x="942" y="317" class="l">B:</text>
<text x="924" y="342" style="font-size:12px;fill:#b4b4b4">#</text>
<text x="1038" y="267" class="l">C:</text><text x="1036" y="292" class="l">M:</text><text x="1039" y="317" class="l">Y:</text><text x="1039" y="342" class="l">K:</text>
<text x="964" y="192" class="f">163°</text><text x="964" y="217" class="f">71%</text><text x="964" y="242" class="f">87%</text><text x="964" y="267" class="f">64</text><text x="964" y="292" class="f">224</text><text x="964" y="317" class="f">181</text>
<text x="941" y="342" class="f" style="fill:#222">40e0b5</text><rect x="985" y="331" width="1" height="13" fill="#000"/>
<text x="1058" y="267" class="f">81%</text><text x="1058" y="292" class="f">0%</text><text x="1058" y="317" class="f">46%</text><text x="1058" y="342" class="f">0%</text>
<rect x="607.500" y="358.500" width="11" height="11" rx="2" fill="#4a4a4a" stroke="#c8c8c8"/>
<text x="624" y="369" style="font-size:12.500px;fill:#e4e4e4" textLength="96" lengthAdjust="spacingAndGlyphs">Only Web Colors</text>
<!-- tooltip -->
<rect x="1011" y="113" width="222" height="18" fill="#c4c4c4"/>
<text x="1018" y="126" style="font-size:12px;fill:#555" textLength="207" lengthAdjust="spacingAndGlyphs">Out of Gamut Warning (click to correct)</text>
</svg>
</body></html>
